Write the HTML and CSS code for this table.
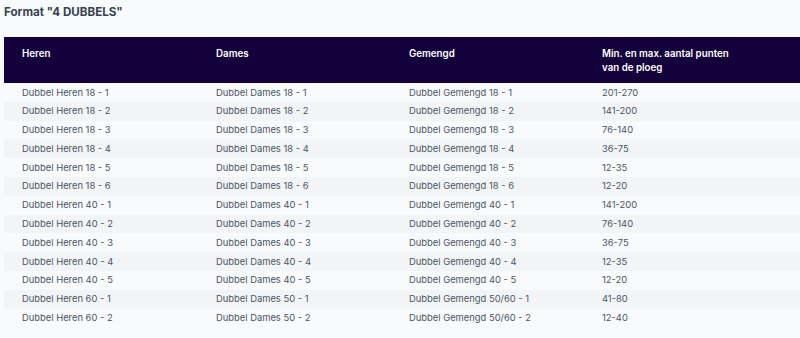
FILE: index.html
```html
<!DOCTYPE html>
<html lang="nl">
<head>
<meta charset="utf-8">
<link rel="stylesheet" href="styles.css">
</head>
<body>
<h3 class="title">Format "4 DUBBELS"</h3>
<table class="format-table">
<colgroup><col class="c1"><col class="c2"><col class="c3"><col class="c4"></colgroup>
<thead>
<tr><th>Heren</th><th>Dames</th><th>Gemengd</th><th>Min. en max. aantal punten<br>van de ploeg</th></tr>
</thead>
<tbody>
<tr><td>Dubbel Heren 18 - 1</td><td>Dubbel Dames 18 - 1</td><td>Dubbel Gemengd 18 - 1</td><td>201-270</td></tr>
<tr><td>Dubbel Heren 18 - 2</td><td>Dubbel Dames 18 - 2</td><td>Dubbel Gemengd 18 - 2</td><td>141-200</td></tr>
<tr><td>Dubbel Heren 18 - 3</td><td>Dubbel Dames 18 - 3</td><td>Dubbel Gemengd 18 - 3</td><td>76-140</td></tr>
<tr><td>Dubbel Heren 18 - 4</td><td>Dubbel Dames 18 - 4</td><td>Dubbel Gemengd 18 - 4</td><td>36-75</td></tr>
<tr><td>Dubbel Heren 18 - 5</td><td>Dubbel Dames 18 - 5</td><td>Dubbel Gemengd 18 - 5</td><td>12-35</td></tr>
<tr><td>Dubbel Heren 18 - 6</td><td>Dubbel Dames 18 - 6</td><td>Dubbel Gemengd 18 - 6</td><td>12-20</td></tr>
<tr><td>Dubbel Heren 40 - 1</td><td>Dubbel Dames 40 - 1</td><td>Dubbel Gemengd 40 - 1</td><td>141-200</td></tr>
<tr><td>Dubbel Heren 40 - 2</td><td>Dubbel Dames 40 - 2</td><td>Dubbel Gemengd 40 - 2</td><td>76-140</td></tr>
<tr><td>Dubbel Heren 40 - 3</td><td>Dubbel Dames 40 - 3</td><td>Dubbel Gemengd 40 - 3</td><td>36-75</td></tr>
<tr><td>Dubbel Heren 40 - 4</td><td>Dubbel Dames 40 - 4</td><td>Dubbel Gemengd 40 - 4</td><td>12-35</td></tr>
<tr><td>Dubbel Heren 40 - 5</td><td>Dubbel Dames 40 - 5</td><td>Dubbel Gemengd 40 - 5</td><td>12-20</td></tr>
<tr><td>Dubbel Heren 60 - 1</td><td>Dubbel Dames 50 - 1</td><td>Dubbel Gemengd 50/60 - 1</td><td>41-80</td></tr>
<tr><td>Dubbel Heren 60 - 2</td><td>Dubbel Dames 50 - 2</td><td>Dubbel Gemengd 50/60 - 2</td><td>12-40</td></tr>
</tbody>
</table>
</body>
</html>
```
FILE: styles.css
```css
html, body {
  margin: 0;
  background: #f9fafb;
}
body {
  padding: 0 0 0 4px;
  font-family: Inter, "Noto Sans", sans-serif;
  color: #4b5563;
}
.title {
  margin: 0;
  padding-top: 4px;
  height: 37px;
  box-sizing: border-box;
  font-size: 11.6px;
  line-height: 16px;
  font-weight: 700;
  color: #374151;
}
.format-table {
  border-collapse: collapse;
  table-layout: fixed;
  width: 796px;
  font-size: 9.4px;
}
.c1 { width: 194px; }
.c2 { width: 193px; }
.c3 { width: 193px; }
.c4 { width: 216px; }
.format-table th {
  background: #14003a;
  color: #ffffff;
  font-size: 9.75px;
  font-weight: 600;
  text-align: left;
  vertical-align: top;
  padding: 10px 18px 8px;
  line-height: 14px;
}
.format-table td {
  padding: 2.5px 18px 1.5px;
  line-height: 14.8px;
  white-space: nowrap;
}
.format-table tbody tr:nth-child(even) td {
  background: #f3f4f6;
}
```
